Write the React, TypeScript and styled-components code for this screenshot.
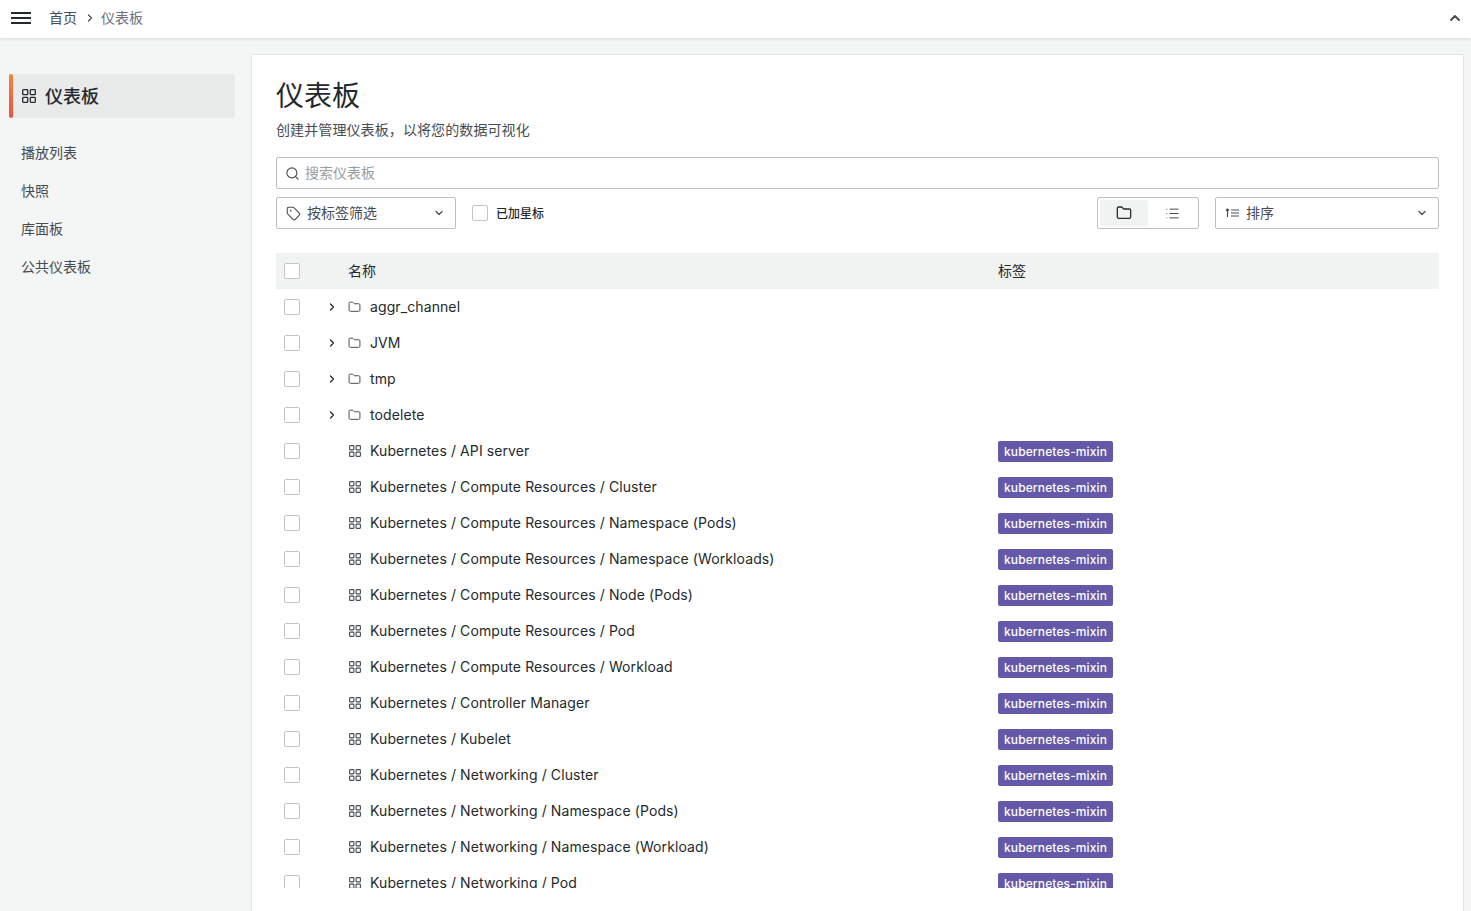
import * as React from 'react';
import styled, { createGlobalStyle } from 'styled-components';
import { ChevronDown, ChevronRight, ChevronUp, Folder, List, Search, Tag } from 'lucide-react';

const GlobalStyle = createGlobalStyle`
	html, body {
		margin: 0;
		height: 100%;
		overflow: hidden;
	}
	body {
		background: #f4f5f5;
		color: #24292e;
		font-family: Inter, "Noto Sans CJK SC", sans-serif;
		font-size: 14px;
	}
	* {
		box-sizing: border-box;
	}
`;

const Page = styled.div`
	height: 911px;
	display: flex;
	flex-direction: column;
	overflow: hidden;
	position: relative;
`;

const Watermarks = styled.div`
	position: absolute;
	inset: 0;
	display: grid;
	grid-template-columns: repeat(5, 300px);
	grid-auto-rows: 300px;
	padding: 93px 0 0 47px;
	pointer-events: none;
`;

const Watermark = styled.span`
	font-family: "Liberation Serif", serif;
	font-size: 16px;
	line-height: 20px;
	color: rgba(0, 0, 0, 0.02);
`;

const TopBar = styled.header`
	height: 38px;
	flex: none;
	display: flex;
	align-items: center;
	padding: 0 8px 2px 11px;
	background: #fff;
	box-shadow: 0 1px 3px rgba(24, 26, 27, 0.14);
	position: relative;
`;

const Burger = styled.div`
	width: 20px;
	height: 12px;
	border-top: 2px solid #24292e;
	border-bottom: 2px solid #24292e;
	position: relative;
	margin-right: 18px;

	&::after {
		content: '';
		position: absolute;
		left: 0;
		right: 0;
		top: 3px;
		height: 2px;
		background: #24292e;
	}
`;

const Crumb = styled.span<{ $current?: boolean }>`
	font-size: 14px;
	margin-bottom: 2px;
	color: ${(p) => (p.$current ? '#6e7178' : '#464c54')};
`;

const CrumbSep = styled(ChevronRight)`
	margin: 0 5px 0 7px;
	color: #464c54;
`;

const Collapse = styled(ChevronUp)`
	margin-left: auto;
	color: #464c54;
`;

const Body = styled.div`
	flex: 1;
	min-height: 0;
	display: flex;
	padding-top: 16px;
	padding-right: 7px;
`;

const Sidebar = styled.nav`
	width: 251px;
	flex: none;
	padding: 20px 16px 0 9px;
`;

const ActiveItem = styled.div`
	height: 44px;
	display: flex;
	align-items: center;
	gap: 9px;
	padding-left: 13px;
	margin-bottom: 16px;
	border-radius: 2px;
	background: #e9eaea;
	font-size: 18px;
	font-weight: 500;
	position: relative;

	&::before {
		content: '';
		position: absolute;
		left: 0;
		top: 0;
		bottom: 0;
		width: 4px;
		border-radius: 2px;
		background: linear-gradient(180deg, #f2863c, #e8533f);
	}
`;

const ActiveLabel = styled.span`
	margin-bottom: 2px;
`;

const NavItem = styled.div`
	height: 38px;
	display: flex;
	align-items: center;
	padding: 0 0 2px 12px;
	font-size: 14px;
	color: #464c54;
`;

const Main = styled.main`
	flex: 1;
	min-width: 0;
	background: #fff;
	border: 1px solid #e4e5e6;
	border-bottom: 0;
	border-radius: 2px 2px 0 0;
	padding: 21px 24px 0;
	display: flex;
	flex-direction: column;
`;

const Title = styled.h1`
	margin: 0;
	font-size: 28px;
	line-height: 40px;
	font-weight: 400;
`;

const Subtitle = styled.p`
	margin: 4px 0 17px;
	font-size: 14px;
	line-height: 20px;
	letter-spacing: 0.1px;
	color: #464c54;
`;

const SearchBox = styled.div`
	height: 32px;
	display: flex;
	align-items: center;
	gap: 5px;
	padding: 0 8px;
	border: 1px solid #bdbfc1;
	border-radius: 2px;
	color: #9a9da1;
	font-size: 14px;

	svg {
		color: #464c54;
	}
`;

const Placeholder = styled.span`
	margin-bottom: 2px;
`;

const FilterRow = styled.div`
	display: flex;
	align-items: center;
	margin-top: 8px;
	margin-bottom: 24px;
`;

const SelectBox = styled.div<{ $width: number }>`
	width: ${(p) => p.$width}px;
	height: 32px;
	display: flex;
	align-items: center;
	padding: 0 10px 0 9px;
	border: 1px solid #bdbfc1;
	border-radius: 2px;
	font-size: 14px;
	color: #464c54;
`;

const SelectLabel = styled.span`
	flex: 1;
	margin: 0 0 2px 6px;
`;

const Check = styled.span`
	width: 16px;
	height: 16px;
	flex: none;
	display: block;
	border: 1px solid #c2c4c6;
	border-radius: 2px;
	background: #fff;
`;

const Starred = styled.label`
	display: flex;
	align-items: center;
	gap: 8px;
	margin-left: 16px;
	font-size: 12px;
	font-weight: 500;
`;

const StarredLabel = styled.span`
	margin-bottom: 2px;
`;

const ViewToggle = styled.div`
	margin-left: auto;
	margin-right: 16px;
	width: 102px;
	height: 32px;
	display: flex;
	padding: 2px;
	border: 1px solid #bdbfc1;
	border-radius: 2px;
`;

const ViewButton = styled.div<{ $active?: boolean }>`
	width: 48px;
	display: flex;
	align-items: center;
	justify-content: center;
	border-radius: 2px;
	background: ${(p) => (p.$active ? '#f1f2f2' : 'transparent')};
	color: ${(p) => (p.$active ? '#24292e' : '#464c54')};
`;

const SortIcon = styled.svg`
	flex: none;
`;

const TableClip = styled.div`
	height: 635px;
	overflow: hidden;
`;

const HeadRow = styled.div`
	height: 36px;
	display: grid;
	grid-template-columns: 64px 650px 1fr;
	align-items: center;
	background: #f1f2f2;
	padding-left: 8px;
	font-size: 14px;
`;

const HeadLabel = styled.span`
	margin-bottom: 2px;
`;

const Row = styled.div`
	height: 36px;
	display: grid;
	grid-template-columns: 64px 650px 1fr;
	align-items: center;
	padding-left: 8px;
`;

const NameCell = styled.div`
	display: flex;
	align-items: center;
	gap: 9px;
	font-size: 14px;
	letter-spacing: 0.1px;
	color: #24292e;
	position: relative;
`;

const NameText = styled.span`
	margin-bottom: 2px;
`;

const Expander = styled(ChevronRight)`
	position: absolute;
	left: -22px;
	color: #24292e;
`;

const RowIcon = styled.span`
	width: 13px;
	height: 14px;
	flex: none;
	display: flex;
	align-items: center;
	justify-content: flex-end;
	color: #464c54;
`;

const Badge = styled.span`
	display: inline-block;
	height: 21px;
	line-height: 21px;
	padding: 0 6px;
	border-radius: 2px;
	background: #6558a8;
	color: #fff;
	font-size: 12px;
	font-weight: 500;
	letter-spacing: 0.12px;
`;

const BadgeCell = styled.div`
	display: flex;
`;

// grafana's "apps" icon, four rounded squares
const AppsIcon = ({ size }: { size: number }) => (
	<svg width={size} height={size} viewBox="0 0 12 12" fill="none" stroke="currentColor" strokeWidth="1.1">
		<rect x="0.6" y="0.6" width="4.3" height="4.3" rx="0.6" />
		<rect x="7.1" y="0.6" width="4.3" height="4.3" rx="0.6" />
		<rect x="0.6" y="7.1" width="4.3" height="4.3" rx="0.6" />
		<rect x="7.1" y="7.1" width="4.3" height="4.3" rx="0.6" />
	</svg>
);

const folders = ['aggr_channel', 'JVM', 'tmp', 'todelete'];

const dashboards = [
	'Kubernetes / API server',
	'Kubernetes / Compute Resources / Cluster',
	'Kubernetes / Compute Resources / Namespace (Pods)',
	'Kubernetes / Compute Resources / Namespace (Workloads)',
	'Kubernetes / Compute Resources / Node (Pods)',
	'Kubernetes / Compute Resources / Pod',
	'Kubernetes / Compute Resources / Workload',
	'Kubernetes / Controller Manager',
	'Kubernetes / Kubelet',
	'Kubernetes / Networking / Cluster',
	'Kubernetes / Networking / Namespace (Pods)',
	'Kubernetes / Networking / Namespace (Workload)',
	'Kubernetes / Networking / Pod',
];

export default function App() {
	return (
		<Page>
			<GlobalStyle />
			<TopBar>
				<Burger />
				<Crumb>首页</Crumb>
				<CrumbSep size={12} strokeWidth={2.4} />
				<Crumb $current>仪表板</Crumb>
				<Collapse size={16} strokeWidth={2.8} />
			</TopBar>
			<Body>
				<Sidebar>
					<ActiveItem>
						<AppsIcon size={14} />
						<ActiveLabel>仪表板</ActiveLabel>
					</ActiveItem>
					<NavItem>播放列表</NavItem>
					<NavItem>快照</NavItem>
					<NavItem>库面板</NavItem>
					<NavItem>公共仪表板</NavItem>
				</Sidebar>
				<Main>
					<Title>仪表板</Title>
					<Subtitle>创建并管理仪表板，以将您的数据可视化</Subtitle>
					<SearchBox>
						<Search size={15} strokeWidth={1.8} />
						<Placeholder>搜索仪表板</Placeholder>
					</SearchBox>
					<FilterRow>
						<SelectBox $width={180}>
							<Tag size={15} strokeWidth={1.7} />
							<SelectLabel>按标签筛选</SelectLabel>
							<ChevronDown size={12} strokeWidth={2.6} />
						</SelectBox>
						<Starred>
							<Check />
							<StarredLabel>已加星标</StarredLabel>
						</Starred>
						<ViewToggle>
							<ViewButton $active>
								<Folder size={16} strokeWidth={1.9} />
							</ViewButton>
							<ViewButton>
								<List size={15} strokeWidth={1.6} />
							</ViewButton>
						</ViewToggle>
						<SelectBox $width={224}>
							<SortIcon width="15" height="14" viewBox="0 0 15 14" fill="none" stroke="currentColor" strokeWidth="1.2">
								<path d="M2.5 11V3M1 4.5 2.5 3 4 4.5M6 4h8M6 7h8M6 10h8" />
							</SortIcon>
							<SelectLabel>排序</SelectLabel>
							<ChevronDown size={12} strokeWidth={2.6} />
						</SelectBox>
					</FilterRow>
					<TableClip>
						<HeadRow>
							<Check />
							<HeadLabel>名称</HeadLabel>
							<HeadLabel>标签</HeadLabel>
						</HeadRow>
						{folders.map((name) => (
							<Row key={name}>
								<Check />
								<NameCell>
									<Expander size={12} strokeWidth={2.6} />
									<RowIcon>
										<Folder size={14} strokeWidth={1.8} />
									</RowIcon>
									<NameText>{name}</NameText>
								</NameCell>
							</Row>
						))}
						{dashboards.map((name) => (
							<Row key={name}>
								<Check />
								<NameCell>
									<RowIcon>
										<AppsIcon size={12} />
									</RowIcon>
									<NameText>{name}</NameText>
								</NameCell>
								<BadgeCell>
									<Badge>kubernetes-mixin</Badge>
								</BadgeCell>
							</Row>
						))}
					</TableClip>
				</Main>
			</Body>
			<Watermarks>
				{Array.from({ length: 15 }, (_, i) => (
					<Watermark key={i}>-mobile</Watermark>
				))}
			</Watermarks>
		</Page>
	);
}
